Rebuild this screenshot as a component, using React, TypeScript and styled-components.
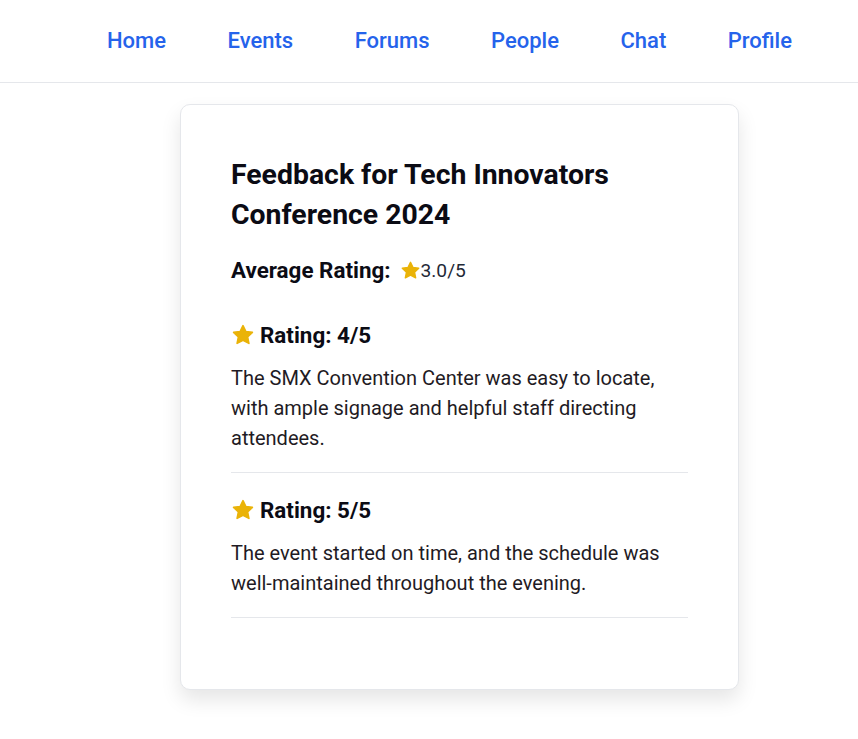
import styled, { createGlobalStyle } from 'styled-components';

const GlobalStyle = createGlobalStyle`
  html, body {
    margin: 0;
    padding: 0;
    background: #ffffff;
    font-family: Roboto, 'Liberation Sans', sans-serif;
    color: #111827;
  }
`;

type Review = {
  id: number;
  rating: number;
  comment: string;
};

const reviews: Review[] = [
  {
    id: 1,
    rating: 4,
    comment:
      'The SMX Convention Center was easy to locate, with ample signage and helpful staff directing attendees.',
  },
  {
    id: 2,
    rating: 5,
    comment:
      'The event started on time, and the schedule was well-maintained throughout the evening.',
  },
];

const links = ['Home', 'Events', 'Forums', 'People', 'Chat', 'Profile'];

const Nav = styled.nav`
  height: 83px;
  display: flex;
  align-items: center;
  justify-content: flex-end;
  gap: 61.5px;
  padding-right: 66px;
  border-bottom: 1px solid #e5e7eb;
  box-sizing: border-box;
`;

const NavLink = styled.a`
  color: #2563eb;
  font-size: 22px;
  font-weight: 500;
  text-decoration: none;
  cursor: pointer;
  margin-top: -2px;
`;

const Main = styled.main`
  display: flex;
  justify-content: center;
  padding: 21px 0 40px 61px;
`;

const Card = styled.section`
  width: 559px;
  box-sizing: border-box;
  padding: 50px 50px 51px;
  background: #fff;
  border: 1px solid #e5e7eb;
  border-radius: 10px;
  box-shadow: 0 10px 20px rgba(0, 0, 0, 0.1);
`;

const Title = styled.h2`
  margin: 0 0 20px;
  font-size: 28.4px;
  line-height: 40px;
  font-weight: 700;
  color: #0b0b14;
`;

const Average = styled.div`
  display: flex;
  align-items: center;
  height: 30px;
  margin-bottom: 15px;
  font-size: 22.4px;
  font-weight: 700;
  color: #0b0b14;
`;

const AvgValue = styled.span`
  display: inline-flex;
  align-items: center;
  margin-left: 9px;
  font-size: 19.2px;
  font-weight: 400;
  color: #1f2937;
`;

const List = styled.div`
  margin-bottom: 20px;
`;

const Item = styled.div`
  padding: 22px 0 19px;
  border-bottom: 1px solid #e5e7eb;
  &:first-child {
    padding-top: 20px;
  }
`;

const ItemHead = styled.div`
  display: flex;
  align-items: center;
  gap: 5px;
  height: 30px;
  margin-bottom: 13px;
  font-size: 22.4px;
  font-weight: 700;
  color: #0b0b14;
`;

const Comment = styled.p`
  margin: 0;
  font-size: 20px;
  line-height: 30px;
  color: #1f1b24;
`;

const Star = ({ size }: { size: number }) => (
  <svg width={size} height={size} viewBox="0 0 24 24">
    <path
      fill="#eab308"
      stroke="#eab308"
      strokeWidth={1.6}
      strokeLinejoin="round"
      d="M12 2.6l2.9 6 6.5.8-4.8 4.5 1.3 6.5L12 17.2l-5.9 3.2 1.3-6.5-4.8-4.5 6.5-.8z"
    />
  </svg>
);

const App = () => {
  const avg = reviews.reduce((s, r) => s + r.rating, 0) / reviews.length;

  return (
    <>
      <GlobalStyle />
      <Nav>
        {links.map((l) => (
          <NavLink key={l}>{l}</NavLink>
        ))}
      </Nav>
      <Main>
        <Card>
          <Title>Feedback for Tech Innovators Conference 2024</Title>
          <Average>
            Average Rating:
            <AvgValue>
              <Star size={21} />
              {(avg - 1.5).toFixed(1)}/5
            </AvgValue>
          </Average>
          <List>
            {reviews.map((r) => (
              <Item key={r.id}>
                <ItemHead>
                  <Star size={24} />
                  Rating: {r.rating}/5
                </ItemHead>
                <Comment>{r.comment}</Comment>
              </Item>
            ))}
          </List>
        </Card>
      </Main>
    </>
  );
};

export default App;
